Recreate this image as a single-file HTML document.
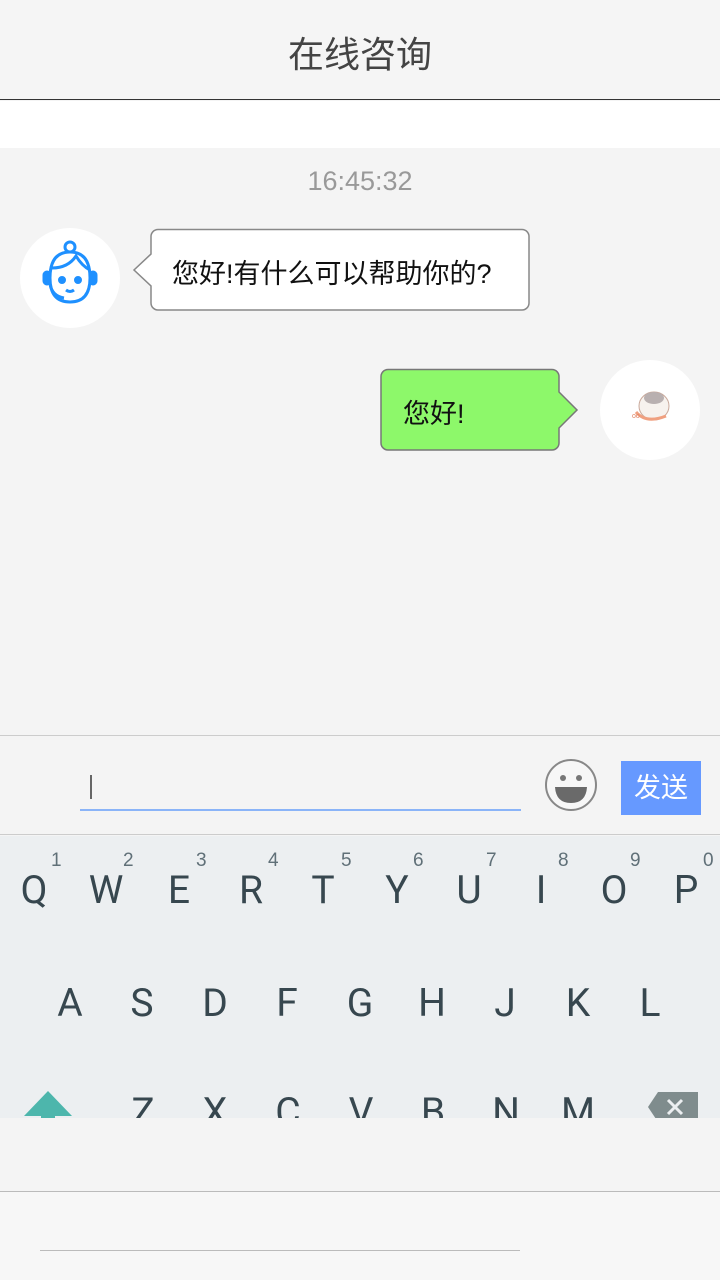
<!DOCTYPE html><html><head><meta charset="utf-8"><style>
*{margin:0;padding:0;box-sizing:border-box}
body{width:720px;height:1280px;position:relative;overflow:hidden;background:#f4f4f4;font-family:"Liberation Sans","Noto Sans CJK SC",sans-serif}
.a{position:absolute}
.k{position:absolute;width:60px;margin-left:-30px;text-align:center;font-family:"Roboto","Liberation Sans",sans-serif;font-size:39px;color:#37474f}
.n{position:absolute;font-size:19px;color:#607078;font-family:"Liberation Sans",sans-serif}
</style></head><body>
<div class="a" style="left:0;top:0;width:720px;height:100px;background:#f5f5f5;border-bottom:1px solid #333"></div>
<div class="a" style="left:0;top:26px;width:720px;text-align:center;font-size:36px;color:#444">在线咨询</div>
<div class="a" style="left:0;top:101px;width:720px;height:47px;background:#fff"></div>
<div class="a" style="left:0;top:166px;width:720px;text-align:center;font-size:27px;color:#999">16:45:32</div>

<div class="a" style="left:20px;top:228px;width:100px;height:100px;border-radius:50%;background:#fff"></div>
<svg class="a" style="left:40px;top:240px" width="60" height="76" viewBox="0 0 60 76" fill="none" stroke="#1e90ff" stroke-width="3">
<circle cx="30" cy="7" r="5"/><path d="M10 38 Q10 12 30 12 Q50 12 50 38 Q50 62 30 62 Q10 62 10 38Z"/><path d="M12 28 Q28 28 36 16 Q42 26 50 30"/><circle cx="22" cy="40" r="2.5" fill="#1e90ff"/><circle cx="38" cy="40" r="2.5" fill="#1e90ff"/><path d="M26 50 Q30 53 34 50"/><rect x="4" y="32" width="6" height="12" rx="3" fill="#1e90ff"/><rect x="50" y="32" width="6" height="12" rx="3" fill="#1e90ff"/><path d="M10 44 Q12 56 24 58"/></svg>
<svg class="a" style="left:132px;top:228px" width="400" height="86"><path d="M26 1.5 H390 a7 7 0 0 1 7 7 V75 a7 7 0 0 1 -7 7 H26 a7 7 0 0 1 -7 -7 V58 L2 42 L19 26 V8.5 a7 7 0 0 1 7 -7Z" fill="#fff" stroke="#888" stroke-width="1.5"/></svg>
<div class="a" style="left:172px;top:252px;font-size:27px;color:#111">您好!有什么可以帮助你的?</div>

<svg class="a" style="left:380px;top:368px" width="200" height="86"><path d="M8 1.5 H172 a7 7 0 0 1 7 7 V24 L197 42 L179 60 V75 a7 7 0 0 1 -7 7 H8 a7 7 0 0 1 -7 -7 V8.5 a7 7 0 0 1 7 -7Z" fill="#8df86a" stroke="#777" stroke-width="1.5"/></svg>
<div class="a" style="left:403px;top:392px;font-size:27px;color:#111">您好!</div>
<div class="a" style="left:600px;top:360px;width:100px;height:100px;border-radius:50%;background:#fff"></div>
<svg class="a" style="left:624px;top:384px" width="52" height="52"><ellipse cx="30" cy="22" rx="15" ry="14" fill="#f7f2ee" stroke="#c9a89a"/><ellipse cx="30" cy="14" rx="10" ry="6" fill="#b9b0b0"/><path d="M12 28 Q22 40 42 32" stroke="#f0a080" stroke-width="3" fill="none"/><text x="8" y="34" font-size="7" fill="#e08060">oo</text></svg>

<div class="a" style="left:0;top:735px;width:720px;height:100px;border-top:1px solid #ccc;border-bottom:1px solid #ccc;background:#f4f4f4"></div>
<div class="a" style="left:80px;top:809px;width:441px;height:2px;background:#8ab4f8"></div>
<div class="a" style="left:90px;top:775px;width:1.5px;height:24px;background:#666"></div>
<svg class="a" style="left:544px;top:758px" width="54" height="54"><circle cx="27" cy="27" r="25" fill="#f7f7f7" stroke="#888" stroke-width="2"/><circle cx="19" cy="20" r="3" fill="#777"/><circle cx="35" cy="20" r="3" fill="#777"/><path d="M11 29 H43 Q42 45 27 45 Q12 45 11 29Z" fill="#6a6a6a"/></svg>
<div class="a" style="left:621px;top:761px;width:80px;height:54px;background:#6699ff;color:#fff;font-size:27px;text-align:center;line-height:54px">发送</div>

<div class="a" style="left:0;top:836px;width:720px;height:282px;background:#eceff1;overflow:hidden">
<div class="k" style="left:34px;top:31px">Q</div><div class="k" style="left:106px;top:31px">W</div><div class="k" style="left:179px;top:31px">E</div><div class="k" style="left:251px;top:31px">R</div><div class="k" style="left:323px;top:31px">T</div><div class="k" style="left:397px;top:31px">Y</div><div class="k" style="left:469px;top:31px">U</div><div class="k" style="left:541px;top:31px">I</div><div class="k" style="left:614px;top:31px">O</div><div class="k" style="left:686px;top:31px">P</div>
<div class="n" style="left:51px;top:14px">1</div><div class="n" style="left:123px;top:14px">2</div><div class="n" style="left:196px;top:14px">3</div><div class="n" style="left:268px;top:14px">4</div><div class="n" style="left:341px;top:14px">5</div><div class="n" style="left:413px;top:14px">6</div><div class="n" style="left:486px;top:14px">7</div><div class="n" style="left:558px;top:14px">8</div><div class="n" style="left:630px;top:14px">9</div><div class="n" style="left:703px;top:14px">0</div>
<div class="k" style="left:70px;top:144px">A</div><div class="k" style="left:142px;top:144px">S</div><div class="k" style="left:215px;top:144px">D</div><div class="k" style="left:287px;top:144px">F</div><div class="k" style="left:360px;top:144px">G</div><div class="k" style="left:432px;top:144px">H</div><div class="k" style="left:505px;top:144px">J</div><div class="k" style="left:578px;top:144px">K</div><div class="k" style="left:650px;top:144px">L</div>
<div class="k" style="left:143px;top:253px">Z</div><div class="k" style="left:215px;top:253px">X</div><div class="k" style="left:288px;top:253px">C</div><div class="k" style="left:361px;top:253px">V</div><div class="k" style="left:433px;top:253px">B</div><div class="k" style="left:506px;top:253px">N</div><div class="k" style="left:578px;top:253px">M</div>
<svg class="a" style="left:24px;top:255px" width="50" height="30"><path d="M0 25 L24 0 L48 25Z" fill="#4db6ac"/><rect x="17" y="24" width="14" height="6" fill="#4db6ac"/></svg>
<svg class="a" style="left:648px;top:256px" width="50" height="30"><path d="M10 0 H50 V30 H10 L0 15Z" fill="#7f8c8d"/><path d="M20 8 L34 22 M34 8 L20 22" stroke="#eceff1" stroke-width="3"/></svg>
</div>
<div class="a" style="left:0;top:1191px;width:720px;height:89px;background:#f7f7f7;border-top:1px solid #bbb"></div>
<div class="a" style="left:40px;top:1250px;width:480px;height:1px;background:#bbb"></div>
</body></html>
